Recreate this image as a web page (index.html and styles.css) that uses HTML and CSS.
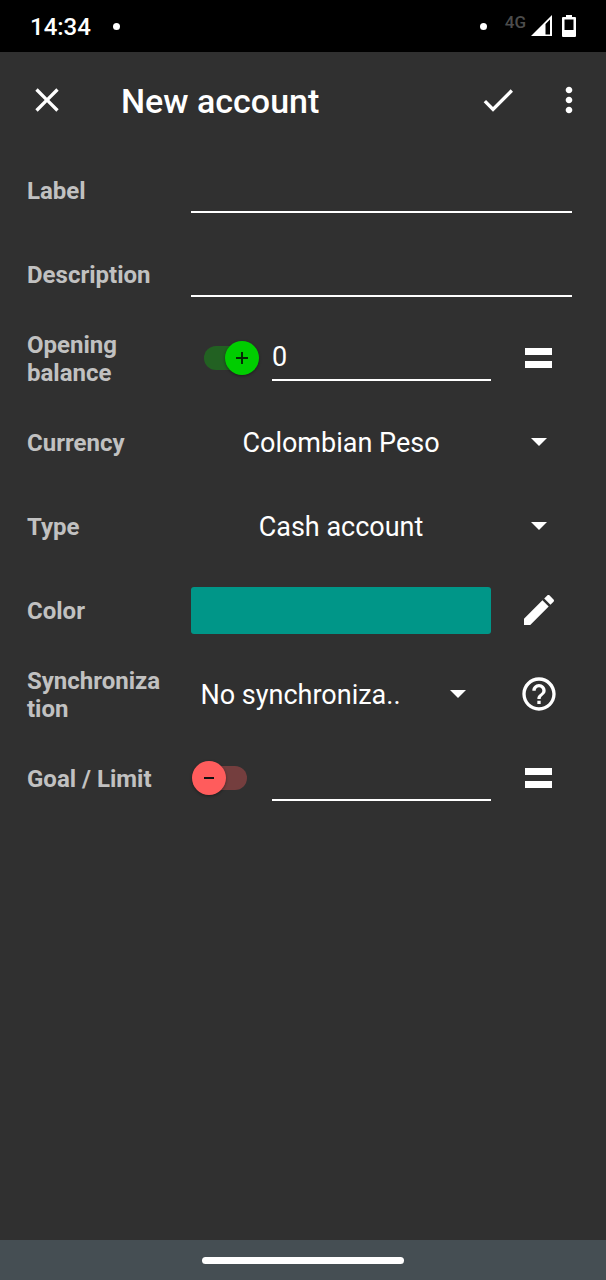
FILE: index.html
```html
<!DOCTYPE html>
<html lang="en">
<head>
<meta charset="utf-8">
<meta name="viewport" content="width=device-width, initial-scale=1">
<title>New account</title>
<link rel="stylesheet" href="styles.css">
</head>
<body>
<div class="status-bar">
  <time class="clock">14:34</time>
  <span class="dot"></span>
  <span class="spacer"></span>
  <span class="dot"></span>
  <div class="signal">
    <span class="network">4G</span>
    <svg width="22" height="22" viewBox="0 0 22 22" aria-hidden="true">
      <path fill="#fff" fill-rule="evenodd" d="M22 0V21H1ZM15.500 9V19.500H20V4.500Z"/>
    </svg>
  </div>
  <svg class="battery" width="14" height="22" viewBox="0 0 14 22" aria-hidden="true">
    <path fill="#fff" fill-rule="evenodd" d="M4 0H10V2H13Q14 2 14 3V21Q14 22 13 22H1Q0 22 0 21V3Q0 2 1 2H4ZM2.500 4.500V15H11.500V4.500Z"/>
  </svg>
</div>

<header class="app-bar">
  <button class="icon-button" type="button" aria-label="Close">
    <svg class="icon" viewBox="0 0 24 24"><path d="M19 6.41L17.59 5 12 10.59 6.41 5 5 6.41 10.59 12 5 17.59 6.41 19 12 13.41 17.59 19 19 17.59 13.41 12z"/></svg>
  </button>
  <h1 class="title">New account</h1>
  <div class="actions">
    <button class="icon-button" type="submit" form="account" aria-label="Save">
      <svg class="icon" viewBox="0 0 24 24"><path d="M9 16.17L4.83 12l-1.42 1.41L9 19 21 7l-1.41-1.41z"/></svg>
    </button>
    <button class="icon-button" type="button" aria-label="More options">
      <svg class="icon" viewBox="0 0 24 24"><path d="M12 8c1.1 0 2-.9 2-2s-.9-2-2-2-2 .9-2 2 .9 2 2 2zm0 2c-1.1 0-2 .9-2 2s.9 2 2 2 2-.9 2-2-.9-2-2-2zm0 6c-1.1 0-2 .9-2 2s.9 2 2 2 2-.9 2-2-.9-2-2-2z"/></svg>
    </button>
  </div>
</header>

<form class="form" id="account">
  <div class="row">
    <label class="label" for="label">Label</label>
    <input class="field wide" id="label" type="text">
  </div>
  <div class="row">
    <label class="label" for="description">Description</label>
    <input class="field wide" id="description" type="text">
  </div>
  <div class="row">
    <label class="label" for="balance">Opening balance</label>
    <div class="amount">
      <input class="switch" type="checkbox" checked aria-label="Positive opening balance">
      <input class="field" id="balance" type="text" inputmode="decimal" value="0">
    </div>
    <button class="icon-button" type="button" aria-label="Calculate opening balance">
      <svg class="icon" viewBox="0 0 40 40"><path d="M6 10H33V17H6ZM6 23H33V30H6Z"/></svg>
    </button>
  </div>
  <div class="row">
    <label class="label" for="currency">Currency</label>
    <div class="dropdown wide">
      <select class="select" id="currency"><option>Colombian Peso</option></select>
    </div>
  </div>
  <div class="row">
    <label class="label" for="type">Type</label>
    <div class="dropdown wide">
      <select class="select" id="type"><option>Cash account</option></select>
    </div>
  </div>
  <div class="row">
    <label class="label" for="color">Color</label>
    <button class="swatch" id="color" type="button"></button>
    <button class="icon-button" type="button" aria-label="Edit color">
      <svg class="icon" viewBox="0 0 24 24"><path d="M3 17.25V21h3.75L17.81 9.94l-3.75-3.75L3 17.25zM20.71 7.04c.39-.39.39-1.02 0-1.41l-2.34-2.34c-.39-.39-1.02-.39-1.41 0l-1.83 1.83 3.75 3.75 1.83-1.83z"/></svg>
    </button>
  </div>
  <div class="row">
    <label class="label" for="sync">Synchronization</label>
    <div class="dropdown">
      <select class="select" id="sync"><option>No synchroniza..</option></select>
    </div>
    <button class="icon-button" type="button" aria-label="Help">
      <svg class="icon" viewBox="0 0 24 24"><path d="M11 18h2v-2h-2v2zm1-16C6.48 2 2 6.48 2 12s4.48 10 10 10 10-4.48 10-10S17.52 2 12 2zm0 18c-4.41 0-8-3.59-8-8s3.59-8 8-8 8 3.59 8 8-3.59 8-8 8zm0-14c-2.21 0-4 1.79-4 4h2c0-1.1.9-2 2-2s2 .9 2 2c0 2-3 1.75-3 5h2c0-2.25 3-2.5 3-5 0-2.21-1.79-4-4-4z"/></svg>
    </button>
  </div>
  <div class="row">
    <label class="label" for="goal">Goal / Limit</label>
    <div class="amount">
      <input class="switch" type="checkbox" aria-label="Positive goal">
      <input class="field" id="goal" type="text" inputmode="decimal">
    </div>
    <button class="icon-button" type="button" aria-label="Calculate goal">
      <svg class="icon" viewBox="0 0 40 40"><path d="M6 10H33V17H6ZM6 23H33V30H6Z"/></svg>
    </button>
  </div>
</form>

<footer class="nav-bar"><span class="handle"></span></footer>
</body>
</html>
```

FILE: styles.css
```css
* {
  box-sizing: border-box;
}

body {
  margin: 0;
  min-height: 100vh;
  display: flex;
  flex-direction: column;
  background: #303030;
  color: #fff;
  font-family: Roboto, sans-serif;
  font-size: 27px;
}

button,
input,
select {
  margin: 0;
  padding: 0;
  border: 0;
  border-radius: 0;
  background: none;
  color: inherit;
  font: inherit;
}

.status-bar {
  display: flex;
  align-items: center;
  height: 52px;
  padding: 0 30px;
  background: #000;
}

.clock {
  margin-right: 22px;
  padding-top: 2px;
  font-size: 24px;
  font-weight: 500;
  line-height: 28px;
}

.dot {
  width: 7px;
  height: 7px;
  border-radius: 50%;
  background: #fff;
}

.spacer {
  flex: 1;
}

.signal {
  display: flex;
  align-items: flex-start;
  gap: 4px;
  margin: 0 10px 0 18px;
}

.network {
  color: #4c4c4c;
  font-size: 17px;
  font-weight: 500;
  line-height: 14px;
}

.app-bar {
  display: flex;
  align-items: center;
  height: 96px;
  padding: 0 17px 0 27px;
}

.title {
  flex: 1;
  margin: 0 0 0 54px;
  padding-top: 2px;
  font-size: 34px;
  font-weight: 500;
  line-height: 40px;
}

.actions {
  display: flex;
  gap: 31px;
}

.icon-button {
  display: flex;
  align-items: center;
  justify-content: center;
}

.icon {
  width: 40px;
  height: 40px;
  fill: #fff;
}

.form {
  flex: 1;
  padding: 0 34px 0 27px;
}

.row {
  display: grid;
  grid-template-columns: 164px 1fr 81px;
  align-items: center;
  min-height: 84px;
}

.row .icon-button {
  padding-left: 14px;
}

.label {
  padding: 2px 26px 0 0;
  color: #c1c1c1;
  font-size: 24px;
  font-weight: 700;
  line-height: 28px;
  overflow-wrap: anywhere;
}

.wide {
  grid-column: 2 / 4;
}

.field {
  width: 100%;
  min-width: 0;
  height: 46px;
  border-bottom: 2px solid #fff;
  outline: 0;
}

.amount {
  display: flex;
  align-items: center;
  gap: 13px;
  padding-left: 1px;
}

.switch {
  appearance: none;
  display: grid;
  flex: none;
  align-items: center;
  width: 67px;
  height: 34px;
}

.switch::before,
.switch::after {
  content: "";
  grid-area: 1 / 1;
}

.switch::before {
  height: 24px;
  margin: 0 12px;
  border-radius: 12px;
  background: #743e3e;
}

.switch::after {
  width: 34px;
  height: 34px;
  border-radius: 50%;
  background: linear-gradient(#111, #111) center / 10px 2px no-repeat #ff5c5c;
  box-shadow: 0 1px 3px rgba(0, 0, 0, 0.4);
}

.switch:checked::before {
  background: #226122;
}

.switch:checked::after {
  justify-self: end;
  background:
    linear-gradient(#062806, #062806) center / 12px 2px no-repeat,
    linear-gradient(#062806, #062806) center / 2px 12px no-repeat,
    #00cd00;
}

.dropdown {
  position: relative;
}

.dropdown::after {
  content: "";
  position: absolute;
  top: 50%;
  right: 25px;
  margin-top: -4px;
  border: solid transparent;
  border-width: 8px 8px 0;
  border-top-color: #fff;
  pointer-events: none;
}

.select {
  appearance: none;
  display: block;
  width: 100%;
  height: 46px;
  padding: 2px 81px 0 0;
  text-align: center;
  text-align-last: center;
}

.swatch {
  height: 47px;
  border-radius: 3px;
  background: #009688;
}

.nav-bar {
  display: flex;
  align-items: center;
  justify-content: center;
  height: 40px;
  background: #454e53;
}

.handle {
  width: 202px;
  height: 7px;
  border-radius: 4px;
  background: #fff;
}
```
